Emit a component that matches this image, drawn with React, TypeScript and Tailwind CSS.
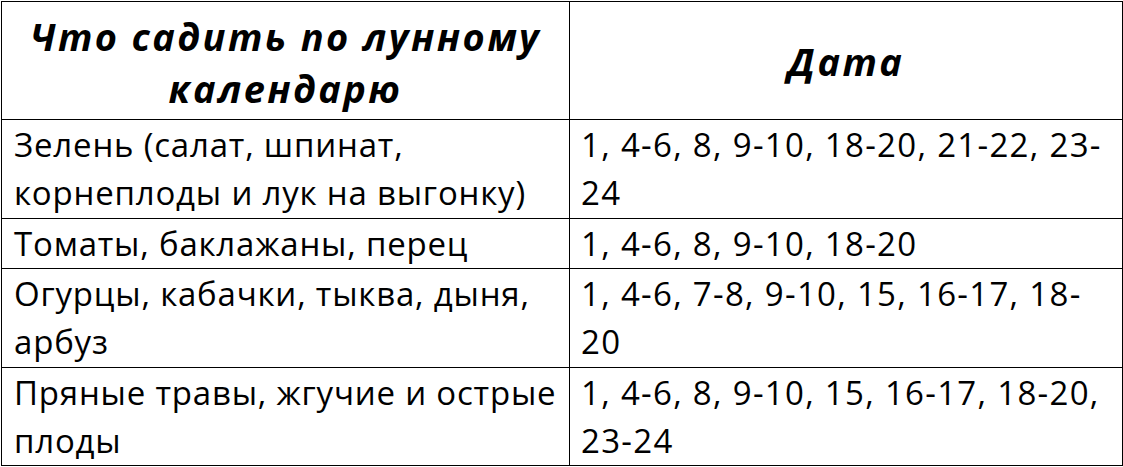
const rows = [
  {
    what: ["Зелень (салат, шпинат,", "корнеплоды и лук на выгонку)"],
    date: ["1, 4-6, 8, 9-10, 18-20, 21-22, 23-", "24"],
    h: "h-[99px]",
  },
  { what: ["Томаты, баклажаны, перец"], date: ["1, 4-6, 8, 9-10, 18-20"], h: "h-[50px]" },
  {
    what: ["Огурцы, кабачки, тыква, дыня,", "арбуз"],
    date: ["1, 4-6, 7-8, 9-10, 15, 16-17, 18-", "20"],
    h: "h-[99px]",
  },
  {
    what: ["Пряные травы, жгучие и острые", "плоды"],
    date: ["1, 4-6, 8, 9-10, 15, 16-17, 18-20,", "23-24"],
    h: "h-[98px]",
  },
];

export default function App() {
  return (
    <div className="w-[1123px] h-[467px] bg-white pt-px pl-px font-['Open_Sans',sans-serif] text-black">
      <table className="w-[1121px] table-fixed border-collapse">
        <colgroup>
          <col className="w-[568px]" />
          <col className="w-[553px]" />
        </colgroup>
        <thead>
          <tr className="h-[118px]">
            <th className="border border-black px-2 pt-[2px] text-center align-middle text-[38px] font-bold italic leading-[52px] tracking-[2.4px]">
              <span className="block whitespace-nowrap">Что садить по лунному</span>
              <span className="block whitespace-nowrap">календарю</span>
            </th>
            <th className="border border-black px-2 text-center align-middle text-[38px] font-bold italic leading-[52px] tracking-[2.4px]">
              Дата
            </th>
          </tr>
        </thead>
        <tbody>
          {rows.map((r) => (
            <tr key={r.what[0]} className={r.h}>
              <td className="border border-black pl-3 pr-1 pt-px align-top text-[33px] leading-[48px] tracking-[0.8px]">
                {r.what.map((line) => (
                  <span key={line} className="block whitespace-nowrap">
                    {line}
                  </span>
                ))}
              </td>
              <td className="border border-black pl-[11px] pr-1 pt-px align-top text-[33px] leading-[48px] tracking-[1.3px]">
                {r.date.map((line) => (
                  <span key={line} className="block whitespace-nowrap">
                    {line}
                  </span>
                ))}
              </td>
            </tr>
          ))}
        </tbody>
      </table>
    </div>
  );
}
